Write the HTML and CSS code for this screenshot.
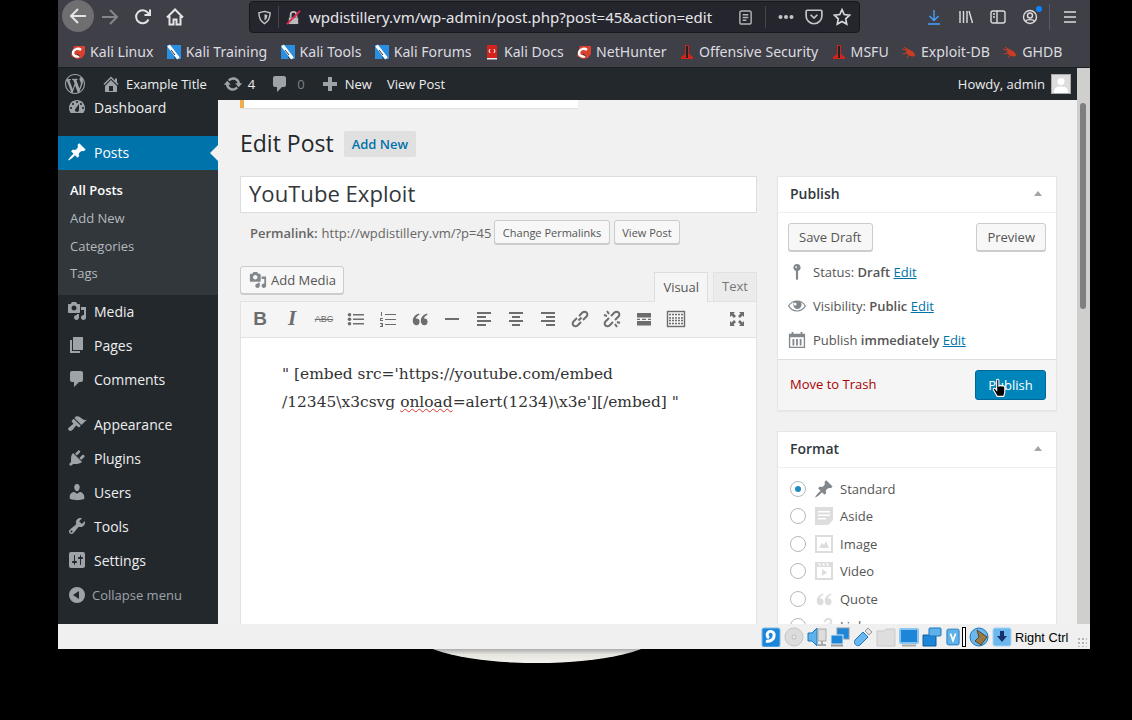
FILE: index.html
```html
<!DOCTYPE html>
<html lang="en">

<head>
  <meta charset="UTF-8" />
  <title>Edit Post | Example Title</title>
  <link rel="stylesheet" href="styles.css">
</head>

<body>
  <!-- dashicons used more than once -->
  <svg class="sprite">
    <symbol id="i-pin" viewBox="0 0 20 20"><path d="M10.44 3.02l1.82-1.82 6.36 6.35-1.83 1.82c-1.05-.68-2.48-.57-3.41.36l-.75.75c-.92.93-1.04 2.35-.35 3.41l-1.83 1.82-2.41-2.41-2.8 2.79c-.42.42-3.38 2.71-3.8 2.29s1.86-3.39 2.28-3.81l2.79-2.79L4.1 9.36l1.83-1.82c1.05.69 2.48.57 3.4-.36l.75-.75c.93-.92 1.05-2.35.36-3.41z"/></symbol>
    <symbol id="i-media" viewBox="0 0 20 20"><path d="M13 11V4c0-.55-.45-1-1-1h-1.67L9 1H5L3.67 3H2c-.55 0-1 .45-1 1v7c0 .55.45 1 1 1h10c.55 0 1-.45 1-1zM7 4.5c1.38 0 2.5 1.12 2.5 2.5S8.38 9.5 7 9.5 4.5 8.38 4.5 7 5.62 4.5 7 4.5zM14 6h5v10.5c0 1.38-1.12 2.5-2.5 2.5S14 17.88 14 16.5s1.12-2.5 2.5-2.5c.17 0 .34.02.5.05V9h-3V6zm-4 8.05V13h2v3.5c0 1.38-1.12 2.5-2.5 2.5S7 17.88 7 16.5 8.12 14 9.5 14c.17 0 .34.02.5.05z"/></symbol>
    <symbol id="i-comment" viewBox="0 0 20 20"><path d="M5 2h9c1.1 0 2 .9 2 2v7c0 1.1-.9 2-2 2h-2l-5 5v-5H5c-1.1 0-2-.9-2-2V4c0-1.1.9-2 2-2z"/></symbol>
    <symbol id="i-quote" viewBox="0 0 20 20"><path d="M9.5 13.2c0 1.8-1.4 3-3 3-2.2 0-3.7-1.8-3.7-4.2 0-3.6 2.6-6.6 6.2-7.4l.5 1.2c-2 .8-3.4 2.3-3.6 4 .4-.2.7-.3 1.1-.3 1.4 0 2.5 1.2 2.5 2.7zm8 0c0 1.8-1.4 3-3 3-2.2 0-3.7-1.8-3.7-4.2 0-3.6 2.6-6.6 6.2-7.4l.5 1.2c-2 .8-3.4 2.3-3.6 4 .4-.2.7-.3 1.1-.3 1.4 0 2.5 1.2 2.5 2.7z"/></symbol>
    <symbol id="i-dragon" viewBox="0 0 16 16"><path fill="#d8412f" d="M4 2h11v8l-3 4-5 1-6-3z"/><path fill="none" stroke="#fff" stroke-width="2.4" d="M11 6C8 3.500 3 5.500 3 9c0 3 4 4.500 6.500 3"/><path fill="none" stroke="#222" stroke-width="1" d="M7 10l3 2.500"/></symbol>
    <symbol id="i-tools" viewBox="0 0 16 16"><path fill="#2a8fe0" d="M1 1h14v14H1z"/><path fill="none" stroke="#fff" stroke-width="3.2" d="M2.500 1.500l10 13"/><path fill="none" stroke="#333" stroke-width="1" d="M5 6l4 5M8 13l2 2"/></symbol>
    <symbol id="i-tower" viewBox="0 0 16 16"><path fill="#d3231c" d="M6 1h4v9l4 3v2H2v-2l4-3z"/><path fill="#222" d="M7 2h2v12H7z"/></symbol>
    <symbol id="i-bug" viewBox="0 0 16 16"><path fill="#c93c25" d="M5 4l6 3c2 1 3 3 3 5-3 1-6 0-8-2-1-2-1-4-1-6z"/><path fill="none" stroke="#c93c25" d="M1 5l4 1M2 10l4-1M6 14l2-3M3 3l3 2"/></symbol>
  </svg>

  <div class="backdrop-plate"></div>

  <div class="window">
    <div class="navbar">
      <span class="nav-back">
        <svg viewBox="0 0 20 20" class="nav-icon"><path d="M3 10h15M10 3l-7 7 7 7"/></svg>
      </span>
      <svg viewBox="0 0 20 20" class="nav-icon nav-fwd"><path d="M2 10h15M10 3l7 7-7 7"/></svg>
      <svg viewBox="0 0 20 20" class="nav-icon nav-reload"><path d="M15.5 12.5a6.5 6.5 0 1 1-.8-6.8L16.5 8"/><path d="M17 2.500V8h-5.500"/></svg>
      <svg viewBox="0 0 20 20" class="nav-icon nav-home"><path d="M2 10.500l8-8 8 8M4.500 9v8.500h4v-5h3v5h4V9"/></svg>

      <div class="urlbar">
        <svg viewBox="0 0 16 16" class="url-shield"><path d="M8 1.500l6 1.500c0 5-1.500 9-6 11.500C3.500 12 2 8 2 3z"/><path class="solid" d="M8 4.500l3 .8c0 2.500-.8 4.500-3 6z"/></svg>
        <span class="url-divider"></span>
        <svg viewBox="0 0 16 16" class="url-lock"><path fill="#bbb" d="M3 8h10v7H3z"/><path fill="none" stroke="#bbb" stroke-width="2" d="M5 8V5a3 3 0 0 1 6 0v3"/><path stroke="#e22850" stroke-width="2" d="M1 15L15 1"/></svg>
        <span class="url-text">wpdistillery.vm/wp-admin/post.php?post=45&amp;action=edit</span>
        <svg viewBox="0 0 16 16" class="url-reader"><rect x="2" y="1" width="12" height="14" rx="2"/><path d="M5 5h6M5 8h6M5 11h4"/></svg>
        <span class="url-divider url-divider-right"></span>
        <svg viewBox="0 0 16 6" class="url-dots"><circle cx="2.500" cy="3" r="2"/><circle cx="8" cy="3" r="2"/><circle cx="13.500" cy="3" r="2"/></svg>
        <svg viewBox="0 0 16 16" class="url-pocket"><path d="M2 2h12a1 1 0 0 1 1 1v4a7 7 0 0 1-14 0V3a1 1 0 0 1 1-1z"/><path d="M5 6l3 3 3-3"/></svg>
        <svg viewBox="0 0 16 16" class="url-star"><path d="M8 1.500l2 4.300 4.700.6-3.400 3.200.9 4.700L8 12l-4.200 2.300.9-4.700L1.300 6.400 6 5.800z"/></svg>
      </div>

      <div class="nav-right">
        <svg viewBox="0 0 16 16" class="tool-icon tool-download"><path d="M8 1v10M3.500 7L8 11.500 12.500 7M2 15h12"/></svg>
        <svg viewBox="0 0 16 16" class="tool-icon tool-library"><path d="M2 2v12M5.500 2v12M9 2v12M11 2l3.500 12"/></svg>
        <svg viewBox="0 0 16 16" class="tool-icon tool-sidebar"><rect x="1" y="2" width="14" height="12" rx="2"/><path d="M7 2v12M3 5h2M3 8h2"/></svg>
        <span class="tool-account">
          <svg viewBox="0 0 16 16" class="tool-icon"><circle cx="8" cy="8" r="6.500"/><circle cx="8" cy="6.500" r="2.500"/><path d="M3.500 12.500c1-2.500 8-2.500 9 0"/></svg>
          <span class="account-dot"></span>
        </span>
        <span class="tool-divider"></span>
        <svg viewBox="0 0 16 16" class="tool-icon tool-menu"><path d="M2 3h12M2 8h12M2 13h12"/></svg>
      </div>
    </div>

    <div class="bookmarks">
      <span class="bookmark"><svg class="fav"><use href="#i-dragon"/></svg>Kali Linux</span>
      <span class="bookmark"><svg class="fav"><use href="#i-tools"/></svg>Kali Training</span>
      <span class="bookmark"><svg class="fav"><use href="#i-tools"/></svg>Kali Tools</span>
      <span class="bookmark"><svg class="fav"><use href="#i-tools"/></svg>Kali Forums</span>
      <span class="bookmark"><svg class="fav" viewBox="0 0 16 16"><path fill="#d3231c" d="M3 1h10v13H3z"/><path fill="#eee" d="M3 14h10v1.500H3z"/><path fill="none" stroke="#fff" d="M6 5L5 7l1 2M10 5l1 2-1 2"/></svg>Kali Docs</span>
      <span class="bookmark"><svg class="fav"><use href="#i-dragon"/></svg>NetHunter</span>
      <span class="bookmark"><svg class="fav"><use href="#i-tower"/></svg>Offensive Security</span>
      <span class="bookmark"><svg class="fav"><use href="#i-tower"/></svg>MSFU</span>
      <span class="bookmark"><svg class="fav"><use href="#i-bug"/></svg>Exploit-DB</span>
      <span class="bookmark"><svg class="fav"><use href="#i-bug"/></svg>GHDB</span>
    </div>

    <div class="viewport">
      <div class="page">
        <div class="adminbar">
          <svg viewBox="0 0 20 20" class="ab-logo"><path d="M20 10c0-5.510-4.490-10-10-10C4.480 0 0 4.490 0 10c0 5.520 4.480 10 10 10 5.510 0 10-4.480 10-10zM7.780 15.370L4.370 6.220c.55-.02 1.170-.08 1.170-.08.5-.06.44-1.130-.06-1.110 0 0-1.450.11-2.370.11-.18 0-.37 0-.58-.01C4.120 2.690 6.870 1.110 10 1.110c2.330 0 4.450.87 6.050 2.340-.68-.11-1.650.39-1.650 1.580 0 .74.45 1.360.9 2.100.35.61.55 1.360.55 2.460 0 1.490-1.400 5-1.400 5l-3.030-8.370c.54-.02.82-.17.82-.17.5-.05.44-1.250-.06-1.220 0 0-1.440.12-2.380.12-.87 0-2.330-.12-2.330-.12-.5-.03-.56 1.200-.06 1.220l.92.08 1.260 3.410zM17.410 10c.24-.64.74-1.870.43-4.250.7 1.290 1.050 2.710 1.050 4.250 0 3.290-1.730 6.240-4.400 7.780.97-2.590 1.940-5.200 2.920-7.780zM6.100 18.090C3.120 16.650 1.110 13.530 1.110 10c0-1.300.23-2.480.72-3.590C3.250 10.300 4.670 14.200 6.100 18.090zm4.030-6.630l2.580 6.980c-.86.29-1.760.45-2.710.45-.79 0-1.570-.11-2.290-.33.81-2.380 1.620-4.740 2.420-7.100z"/></svg>
          <span class="ab-item ab-site">
            <svg viewBox="0 0 20 20" class="ab-icon"><path d="M16 8.500l1.530 1.530-1.060 1.060L10 4.620l-6.470 6.470-1.060-1.060L10 2.500l4 4v-2h2v4zm-6-2.460l6 5.990V18H4v-5.970zM12 17v-5H8v5h4z"/></svg>
            Example Title
          </span>
          <span class="ab-item ab-updates">
            <svg viewBox="0 0 20 20" class="ab-icon"><path d="M10.200 3.280c3.530 0 6.430 2.610 6.920 6h2.080l-3.500 4-3.500-4h2.320c-.45-1.970-2.210-3.450-4.320-3.450-1.450 0-2.730.71-3.540 1.780L4.950 5.660C6.230 4.200 8.110 3.280 10.200 3.280zm-.4 13.440c-3.520 0-6.430-2.610-6.920-6H.8l3.500-4c1.170 1.330 2.330 2.670 3.500 4H5.480c.45 1.970 2.210 3.450 4.320 3.450 1.450 0 2.730-.71 3.540-1.780l1.710 1.950c-1.280 1.460-3.150 2.380-5.250 2.380z"/></svg>
            4
          </span>
          <span class="ab-item ab-comments">
            <svg class="ab-icon"><use href="#i-comment"/></svg>
            <span class="ab-zero">0</span>
          </span>
          <span class="ab-item ab-new">
            <svg viewBox="0 0 20 20" class="ab-icon"><path d="M17 8v4h-5v5H8v-5H3V8h5V3h4v5z"/></svg>
            New
          </span>
          <span class="ab-item">View Post</span>
          <span class="ab-howdy">Howdy, admin
            <span class="ab-avatar"><svg viewBox="0 0 18 18"><rect width="18" height="18" fill="#ddd"/><circle cx="9" cy="6.500" r="3.500" fill="#fff"/><path fill="#fff" d="M2 18c0-6 3-6.500 7-6.500s7 .5 7 6.500z"/></svg></span>
          </span>
        </div>

        <div class="wp-body">
          <nav class="sidebar">
            <div class="menu-item menu-dashboard">
              <svg viewBox="0 0 20 20" class="menu-icon"><path d="M3.760 16h12.480c1.100-1.370 1.760-3.110 1.760-5 0-4.420-3.580-8-8-8s-8 3.580-8 8c0 1.890.66 3.630 1.760 5zM10 4c.55 0 1 .45 1 1s-.45 1-1 1-1-.45-1-1 .45-1 1-1zM6 6c.55 0 1 .45 1 1s-.45 1-1 1-1-.45-1-1 .45-1 1-1zm8 0c.55 0 1 .45 1 1s-.45 1-1 1-1-.45-1-1 .45-1 1-1zm-5.370 5.550L12 7v6c0 1.100-.9 2-2 2s-2-.9-2-2c0-.57.24-1.080.63-1.450zM4 10c.55 0 1 .45 1 1s-.45 1-1 1-1-.45-1-1 .45-1 1-1zm12 0c.55 0 1 .45 1 1s-.45 1-1 1-1-.45-1-1 .45-1 1-1z"/></svg>
              Dashboard
            </div>
            <div class="menu-item menu-current">
              <svg class="menu-icon"><use href="#i-pin"/></svg>
              Posts
            </div>
            <div class="submenu">
              <div class="sub-item sub-current">All Posts</div>
              <div class="sub-item">Add New</div>
              <div class="sub-item">Categories</div>
              <div class="sub-item">Tags</div>
            </div>
            <div class="menu-item">
              <svg class="menu-icon"><use href="#i-media"/></svg>
              Media
            </div>
            <div class="menu-item">
              <svg viewBox="0 0 20 20" class="menu-icon"><path d="M6 15V2h10v13H6zm-1 1h8v2H3V5h2v11z"/></svg>
              Pages
            </div>
            <div class="menu-item">
              <svg class="menu-icon"><use href="#i-comment"/></svg>
              Comments
            </div>
            <div class="menu-sep"></div>
            <div class="menu-item">
              <svg viewBox="0 0 20 20" class="menu-icon"><path d="M14.480 11.060L7.410 3.990l1.500-1.500c.5-.56 2.300-.47 3.510.32 1.210.8 1.430 1.280 2.910 2.100 1.180.64 2.450 1.260 4.450.85zm-.71.71L6.700 4.700 4.930 6.470c-.39.39-.39 1.020 0 1.410l1.060 1.060c.39.39.39 1.030 0 1.420-.6.6-1.430 1.110-2.210 1.690-.35.26-.7.53-1.010.84C1.430 13.230.4 14.980 1.720 16.300c1.330 1.330 3.070.3 4.410-1.050.31-.31.58-.66.85-1.020.57-.78 1.080-1.610 1.690-2.210.39-.39 1.020-.39 1.410 0l1.060 1.060c.39.39 1.020.39 1.410 0z"/></svg>
              Appearance
            </div>
            <div class="menu-item">
              <svg viewBox="0 0 20 20" class="menu-icon"><path d="M13.110 4.360L9.870 7.600 8 5.730l3.240-3.240c.35-.34 1.050-.2 1.560.32.52.51.66 1.210.31 1.550zm-8 1.770l.91-1.120 9.010 9.010-1.190.84c-.71.71-2.630 1.160-3.820 1.160H6.140L4.900 17.260c-.59.59-1.540.59-2.120 0-.59-.58-.59-1.530 0-2.120l1.240-1.240v-3.880c0-1.130.4-3.190 1.090-3.890zm7.260 3.970l3.240-3.240c.34-.35 1.040-.21 1.550.31.52.51.66 1.210.31 1.550l-3.240 3.250z"/></svg>
              Plugins
            </div>
            <div class="menu-item">
              <svg viewBox="0 0 20 20" class="menu-icon"><path d="M10 9.250c-2.270 0-2.730-3.440-2.730-3.440C7 4.020 7.820 2 9.970 2c2.160 0 2.980 2.020 2.710 3.810 0 0-.41 3.440-2.680 3.440zm0 2.570L12.720 10c2.390 0 4.520 2.330 4.520 4.530v2.490s-3.650 1.130-7.240 1.130c-3.650 0-7.240-1.130-7.240-1.130v-2.490c0-2.250 1.940-4.480 4.470-4.480z"/></svg>
              Users
            </div>
            <div class="menu-item">
              <svg viewBox="0 0 20 20" class="menu-icon"><path d="M16.680 9.770c-1.340 1.340-3.300 1.670-4.950.99l-5.410 6.520c-.99.99-2.590.99-3.580 0s-.99-2.590 0-3.570l6.520-5.420c-.68-1.650-.35-3.610.99-4.950 1.280-1.280 3.120-1.620 4.720-1.060l-2.890 2.890 2.820 2.820 2.860-2.870c.53 1.580.18 3.390-1.080 4.650zM3.810 16.210c.4.39 1.040.39 1.430 0 .4-.4.4-1.040 0-1.430-.39-.4-1.030-.4-1.430 0-.39.39-.39 1.030 0 1.430z"/></svg>
              Tools
            </div>
            <div class="menu-item">
              <svg viewBox="0 0 20 20" class="menu-icon"><path d="M18 16V4c0-1.100-.9-2-2-2H4c-1.100 0-2 .9-2 2v12c0 1.100.9 2 2 2h12c1.100 0 2-.9 2-2zM8 11h1c.55 0 1 .45 1 1s-.45 1-1 1H8v1.500c0 .28-.22.5-.5.5s-.5-.22-.5-.5V13H6c-.55 0-1-.45-1-1s.45-1 1-1h1V5.500c0-.28.22-.5.5-.5s.5.22.5.5V11zm5-2h-1c-.55 0-1-.45-1-1s.45-1 1-1h1V5.500c0-.28.22-.5.5-.5s.5.22.5.5V7h1c.55 0 1 .45 1 1s-.45 1-1 1h-1v5.500c0 .28-.22.5-.5.5s-.5-.22-.5-.5V9z"/></svg>
              Settings
            </div>
            <div class="menu-item menu-collapse">
              <svg viewBox="0 0 20 20" class="menu-icon"><path d="M10 2a8 8 0 1 0 0 16 8 8 0 0 0 0-16zm2 12l-6-4 6-4z"/></svg>
              Collapse menu
            </div>
          </nav>

          <main class="content">
            <div class="notice"></div>
            <div class="heading">
              <h1>Edit Post</h1>
              <span class="add-new">Add New</span>
            </div>

            <div class="columns">
              <div class="editor-col">
                <div class="title-box">YouTube Exploit</div>
                <div class="permalink">
                  <b>Permalink:</b> <span class="permalink-url">http://wpdistillery.vm/?p=45</span>
                  <span class="btn btn-small">Change Permalinks</span>
                  <span class="btn btn-small">View Post</span>
                </div>
                <div class="editor-head">
                  <span class="btn btn-media"><svg class="media-icon"><use href="#i-media"/></svg>Add Media</span>
                  <div class="tabs">
                    <span class="tab tab-active">Visual</span>
                    <span class="tab">Text</span>
                  </div>
                </div>
                <div class="editor">
                  <div class="mce-toolbar">
                    <span class="mce-btn mce-b">B</span>
                    <span class="mce-btn mce-i">I</span>
                    <span class="mce-btn mce-abc">ABC</span>
                    <span class="mce-btn"><svg viewBox="0 0 20 20"><path d="M7 5h11v1.500H7zM7 9.500h11V11H7zM7 14h11v1.500H7z"/><circle cx="3.500" cy="5.800" r="1.800"/><circle cx="3.500" cy="10.300" r="1.800"/><circle cx="3.500" cy="14.800" r="1.800"/></svg></span>
                    <span class="mce-btn"><svg viewBox="0 0 20 20"><path d="M7 5h11v1H7zM7 10h11v1H7zM7 15h11v1H7zM3 3h1v4H3zM2 9h3v1H3v1h2v1H2zM2 14h3v4H2v-1h2v-.5H3v-1h1V15H2z"/></svg></span>
                    <span class="mce-btn"><svg><use href="#i-quote"/></svg></span>
                    <span class="mce-btn"><svg viewBox="0 0 20 20"><path d="M3 9h14v2H3z"/></svg></span>
                    <span class="mce-btn"><svg viewBox="0 0 20 20"><path d="M3 3h14v2H3zM3 7h9v2H3zM3 11h14v2H3zM3 15h9v2H3z"/></svg></span>
                    <span class="mce-btn"><svg viewBox="0 0 20 20"><path d="M3 3h14v2H3zM6 7h8v2H6zM3 11h14v2H3zM6 15h8v2H6z"/></svg></span>
                    <span class="mce-btn"><svg viewBox="0 0 20 20"><path d="M3 3h14v2H3zM8 7h9v2H8zM3 11h14v2H3zM8 15h9v2H8z"/></svg></span>
                    <span class="mce-btn"><svg viewBox="0 0 20 20" class="mce-stroke"><path d="M8.500 11.500l3-3M7 9l-3.500 3.500a2.800 2.800 0 0 0 4 4L11 13M9 7l3.500-3.500a2.800 2.800 0 0 1 4 4L13 11"/></svg></span>
                    <span class="mce-btn"><svg viewBox="0 0 20 20" class="mce-stroke"><path d="M7 9l-3.500 3.500a2.800 2.800 0 0 0 4 4L11 13M9 7l3.500-3.500a2.800 2.800 0 0 1 4 4L13 11M5 2l2 3M2 6l3 1M15 18l-2-3M18 14l-3-1"/></svg></span>
                    <span class="mce-btn"><svg viewBox="0 0 20 20"><path d="M3 4h14v4.500H3zM3 12h14v4.500H3zM3 9.700h3v1.200H3zM8 9.700h4v1.200H8zM14 9.700h3v1.200h-3z"/></svg></span>
                    <span class="mce-btn mce-wide"><svg viewBox="0 0 22 22" class="mce-kitchen"><rect x="2.500" y="3.500" width="17" height="15"/><path d="M4 6.500h14M4 10h14M4 12.500h14M4 15.500h14" stroke-dasharray="2 1"/></svg></span>
                    <span class="mce-btn mce-full"><svg viewBox="0 0 20 20"><path d="M3 3h5L6.500 4.500 9 7l-2 2-2.500-2.500L3 8zM17 3v5l-1.500-1.500L13 9l-2-2 2.500-2.500L12 3zM3 17v-5l1.500 1.500L7 11l2 2-2.500 2.500L8 17zM17 17h-5l1.500-1.500L11 13l2-2 2.500 2.500L17 12z"/></svg></span>
                  </div>
                  <div class="mce-body">
                    " [embed src='https://youtube.com/embed<br>
                    /12345\x3csvg <span class="spell">onload</span>=alert(1234)\x3e'][/embed] "
                  </div>
                </div>
              </div>

              <div class="side-col">
                <section class="postbox">
                  <div class="postbox-head">Publish<span class="toggle"></span></div>
                  <div class="publish-actions">
                    <span class="btn btn-action">Save Draft</span>
                    <span class="btn btn-action">Preview</span>
                  </div>
                  <div class="misc-row misc-first">
                    <svg viewBox="0 0 20 20" class="misc-icon"><path d="M10 1a4 4 0 0 1 1.200 7.800V18l-1.200 1-1.200-1V8.800A4 4 0 0 1 10 1zM9 3.500a1 1 0 1 0 0 2 1 1 0 0 0 0-2z"/></svg>
                    <span>Status: <b>Draft</b> <a>Edit</a></span>
                  </div>
                  <div class="misc-row">
                    <svg viewBox="0 0 20 20" class="misc-icon"><path fill-rule="evenodd" d="M10 3.800c4.100 0 7.700 2.200 9.700 5.600l.3.600-.3.600c-2 3.400-5.600 5.600-9.700 5.600S2.300 14 .3 10.600L0 10l.3-.6C2.300 6 5.900 3.800 10 3.800zM5.800 5.900C4 6.800 2.500 8.200 1.500 10c1.800 3 5 4.900 8.500 4.900s6.700-1.900 8.500-4.900c-1-1.800-2.500-3.200-4.300-4.100.6.800.9 1.700.9 2.700a4.600 4.600 0 0 1-9.200 0c0-1 .3-1.900.9-2.700zM8 6.500a1.500 1.500 0 1 0 0 3 1.500 1.500 0 0 0 0-3z"/></svg>
                    <span>Visibility: <b>Public</b> <a>Edit</a></span>
                  </div>
                  <div class="misc-row">
                    <svg viewBox="0 0 20 20" class="misc-icon"><path fill-rule="evenodd" d="M4 1h2v2h8V1h2v2h3v16H1V3h3zM2.500 7v10.500h15V7zM5 9h2v7H5zM9 9h2v7H9zM13 9h2v7h-2z"/></svg>
                    <span>Publish <b>immediately</b> <a>Edit</a></span>
                  </div>
                  <div class="publish-foot">
                    <span class="trash">Move to Trash</span>
                    <span class="btn-primary">Publish
                      <svg viewBox="0 0 14 18" class="hand-cursor"><path fill="#000" stroke="#fff" stroke-width="1" d="M4 1.500c.8-.8 2-.4 2 .8v5l1.200-.6 1.300.4 1.300-.2 1.500.8V13l-1 3.500H4.500L1 10.500c-.4-1 .8-1.800 1.700-1L4 11z"/></svg>
                    </span>
                  </div>
                </section>

                <section class="postbox">
                  <div class="postbox-head">Format<span class="toggle"></span></div>
                  <div class="formats">
                    <div class="format-row"><span class="radio radio-on"></span><svg class="format-icon format-icon-on"><use href="#i-pin"/></svg>Standard</div>
                    <div class="format-row"><span class="radio"></span><svg viewBox="0 0 20 20" class="format-icon"><path fill-rule="evenodd" d="M1 1h18v13l-5 5H1zm3 4v1.500h12V5zm0 3.500V10h12V8.500zM4 12v1.500h8V12z"/></svg>Aside</div>
                    <div class="format-row"><span class="radio"></span><svg viewBox="0 0 20 20" class="format-icon"><path fill-rule="evenodd" d="M1 1h18v18H1zm2 2v14h14V3zm2 11l3-5 2 2 2-4 3 7z"/></svg>Image</div>
                    <div class="format-row"><span class="radio"></span><svg viewBox="0 0 20 20" class="format-icon"><path fill-rule="evenodd" d="M1 1h18v18H1zm2 5v11h14V6zm5 2l5 3.500L8 15zM4 2.500l1 2h2l-1-2zm4 0l1 2h2l-1-2zm4 0l1 2h2l-1-2z"/></svg>Video</div>
                    <div class="format-row"><span class="radio"></span><svg class="format-icon"><use href="#i-quote"/></svg>Quote</div>
                    <div class="format-row"><span class="radio"></span><svg viewBox="0 0 20 20" class="format-icon"><path d="M9 13l5-5M7 10l-4 4a3 3 0 0 0 4 4l3-3M10 6l3-3a3 3 0 0 1 4 4l-3 3" fill="none" stroke="#ddd" stroke-width="2"/></svg>Link</div>
                  </div>
                </section>
              </div>
            </div>
          </main>
        </div>
      </div>

      <div class="scrollbar"><span class="scroll-thumb"></span></div>
    </div>

    <div class="statusbar">
      <svg viewBox="0 0 20 20" class="vb"><rect x="1" y="1" width="18" height="19" rx="2" fill="#1d86d8" stroke="#7dbcea"/><path d="M5 14c3 1 8-1 8-5a3.500 3.500 0 1 0-5 2" fill="none" stroke="#fff" stroke-width="3"/></svg>
      <svg viewBox="0 0 20 20" class="vb"><circle cx="10" cy="10" r="9" fill="#dcdcdc" stroke="#c4c4c4"/><circle cx="10" cy="10" r="2" fill="#eee" stroke="#bbb"/></svg>
      <svg viewBox="0 0 20 20" class="vb"><path d="M1 6h4l5-5v18l-5-5H1z" fill="#5db2ea" stroke="#1c76bd"/><rect x="11" y="2" width="8" height="12" fill="#ddd" stroke="#aaa"/><path d="M15 14v3M11 18h8" stroke="#aaa" stroke-width="2"/></svg>
      <svg viewBox="0 0 20 20" class="vb"><rect x="7" y="1" width="12" height="11" fill="#1d86d8" stroke="#8a9aa6"/><rect x="1" y="8" width="12" height="9" fill="#1d86d8" stroke="#dfeaf3"/><path d="M1 18.500h12" stroke="#999" stroke-width="2"/></svg>
      <svg viewBox="0 0 20 20" class="vb"><path d="M2 13l8-8 5 5-8 8c-3 2-7-1-5-5z" fill="#6bb8ef" stroke="#1c76bd"/><path d="M12 4l3-3 4 4-3 3z" fill="#e4e4e4" stroke="#999"/></svg>
      <svg viewBox="0 0 20 20" class="vb"><path d="M1 4h7l2-2h9v17H1z" fill="#dedede" stroke="#cacaca"/></svg>
      <svg viewBox="0 0 20 20" class="vb"><rect x="1" y="2" width="18" height="14" rx="1" fill="#1d86d8" stroke="#89c4ee" stroke-width="2"/><path d="M3 18.500h14" stroke="#aaa" stroke-width="2"/></svg>
      <svg viewBox="0 0 20 20" class="vb"><path d="M1 8h13v11H1z" fill="#1d86d8" stroke="#145c96"/><rect x="7" y="1" width="12" height="8" rx="1" fill="#5db2ea" stroke="#1c76bd"/></svg>
      <svg viewBox="0 0 16 20" class="vb vb-narrow"><rect x="1" y="1" width="14" height="18" rx="2" fill="#5db2ea" stroke="#1c76bd"/><path d="M5 6l3 8 3-8" fill="none" stroke="#fff" stroke-width="2"/></svg>
      <span class="vb-bar"></span>
      <svg viewBox="0 0 20 20" class="vb"><circle cx="10" cy="10" r="9" fill="#6bb8ef" stroke="#1c76bd"/><path d="M8 3l10 7-6 8-6-4 4-4z" fill="#9a7a45" stroke="#5a4520"/></svg>
      <svg viewBox="0 0 20 20" class="vb"><rect x="1" y="1" width="18" height="18" rx="2" fill="#6bb8ef" stroke="#a9d5f4"/><path d="M8 4h4v5h3l-5 6-5-6h3z" fill="#17306b"/></svg>
      <span class="vb-label">Right Ctrl</span>
      <span class="grip"></span>
    </div>
  </div>
</body>

</html>
```
FILE: styles.css
```css
* {
  box-sizing: border-box;
}

html, body {
  height: 100%;
  overflow: hidden;
}

body {
  margin: 0;
  background: #000;
  font-family: "Open Sans", sans-serif;
  font-size: 13px;
  color: #444;
}

.sprite {
  display: none;
}

/* bit of desktop wallpaper showing under the window */
.backdrop-plate {
  position: absolute;
  left: 414px;
  top: 603px;
  width: 246px;
  height: 60px;
  border-radius: 50%;
  background: linear-gradient(#a8a8a8 76%, #e6e5e0 86%, #f2f1ec);
}

.window {
  position: relative;
  width: 1032px;
  height: 649px;
  margin-left: 58px;
  display: flex;
  flex-direction: column;
}

/* firefox chrome */
.navbar {
  height: 34px;
  background: #3f3f47;
  display: flex;
  align-items: center;
  padding-left: 4px;
}

.nav-icon {
  width: 20px;
  height: 20px;
  fill: none;
  stroke: #e4e4e6;
  stroke-width: 2;
}

.nav-back {
  width: 32px;
  height: 32px;
  margin-bottom: 2px;
  border-radius: 50%;
  background: #6f6f72;
  display: flex;
  align-items: center;
  justify-content: center;
}

.nav-fwd {
  margin-left: 6px;
  stroke: #85858a;
}

.nav-reload {
  margin-left: 13px;
}

.nav-home {
  margin-left: 12px;
}

.urlbar {
  width: 611px;
  height: 32px;
  margin-left: 64px;
  background: #25252d;
  border: 1px solid #18181c;
  border-radius: 4px;
  display: flex;
  align-items: center;
  padding-left: 7px;
  color: #e6e6e8;
}

.url-shield {
  width: 15px;
  height: 15px;
  fill: none;
  stroke: #c4c4c6;
  stroke-width: 1.5;
}

.url-shield .solid {
  fill: #c4c4c6;
  stroke: none;
}

.url-divider {
  width: 1px;
  height: 22px;
  margin-left: 6px;
  background: #45454c;
}

.url-lock {
  width: 15px;
  height: 15px;
  margin-left: 7px;
}

.url-text {
  margin-left: 8px;
  font-family: "Noto Sans", sans-serif;
  font-size: 15px;
  white-space: nowrap;
}

.url-reader {
  width: 15px;
  height: 17px;
  margin-left: 26px;
  fill: none;
  stroke: #b5b5b8;
  stroke-width: 1.5;
}

.url-divider-right {
  margin-left: 12px;
}

.url-dots {
  width: 16px;
  height: 6px;
  margin-left: 12px;
  fill: #c4c4c6;
}

.url-pocket {
  width: 18px;
  height: 18px;
  margin-left: 11px;
  fill: none;
  stroke: #c4c4c6;
  stroke-width: 1.5;
}

.url-star {
  width: 18px;
  height: 18px;
  margin-left: 10px;
  fill: none;
  stroke: #d8d8da;
  stroke-width: 1.5;
}

.nav-right {
  flex: 1;
  display: flex;
  align-items: center;
  padding-left: 66px;
}

.tool-icon {
  width: 16px;
  height: 16px;
  fill: none;
  stroke: #dcdcde;
  stroke-width: 1.4;
  display: block;
}

.tool-download {
  stroke: #45a1ff;
}

.tool-library {
  margin-left: 16px;
}

.tool-sidebar {
  margin-left: 16px;
}

.tool-account {
  position: relative;
  margin-left: 16px;
}

.account-dot {
  position: absolute;
  right: -4px;
  top: -3px;
  width: 6px;
  height: 6px;
  border-radius: 50%;
  background: #0a84ff;
}

.tool-divider {
  width: 1px;
  height: 26px;
  margin-left: 11px;
  background: #5a5a62;
}

.tool-menu {
  margin-left: 12px;
}

.bookmarks {
  height: 34px;
  background: #3f3f47;
  border-bottom: 1px solid #1d1d22;
  display: flex;
  align-items: center;
  padding: 2px 0 0 12px;
  gap: 12.3px;
}

.bookmark {
  display: flex;
  align-items: center;
  font-family: "Noto Sans", sans-serif;
  font-size: 14.1px;
  color: #dcdce0;
  white-space: nowrap;
}

.fav {
  width: 16px;
  height: 16px;
  margin-right: 4px;
}

.viewport {
  flex: 1;
  min-height: 0;
  display: flex;
}

.page {
  flex: 1;
  min-width: 0;
  display: flex;
  flex-direction: column;
}

.scrollbar {
  width: 13px;
  background: #cfcfcd;
  padding: 35px 4px 0 3px;
}

.scroll-thumb {
  display: block;
  height: 206px;
  border-radius: 3px;
  background: #7f7f82;
}

/* wp admin bar */
.adminbar {
  height: 32px;
  flex: none;
  background: #23282d;
  display: flex;
  align-items: center;
  padding: 0 7px;
  color: #eee;
}

.ab-logo {
  width: 20px;
  height: 20px;
  fill: #9ea3a8;
}

.ab-item {
  display: flex;
  align-items: center;
  margin-left: 15px;
  white-space: nowrap;
}

.ab-icon {
  width: 20px;
  height: 20px;
  fill: #9ea3a8;
  margin-right: 5px;
}

.ab-site {
  margin-left: 16px;
}

.ab-updates {
  margin-left: 16px;
}

.ab-comments {
  margin-left: 15px;
}

.ab-comments .ab-icon {
  margin-right: 7px;
}

.ab-zero {
  color: #7e8286;
}

.ab-new {
  margin-left: 15px;
}

.ab-howdy {
  margin-left: auto;
  display: flex;
  align-items: center;
  gap: 7px;
}

.ab-avatar {
  width: 18px;
  height: 18px;
  outline: 1px solid #aaa;
}

.ab-avatar svg {
  display: block;
}

.wp-body {
  flex: 1;
  min-height: 0;
  display: flex;
  overflow: hidden;
  background: #f1f1f1;
}

/* wp left menu */
.sidebar {
  width: 160px;
  flex: none;
  background: #23282d;
  overflow: hidden;
  color: #eee;
  font-size: 14px;
}

.menu-item {
  height: 34px;
  display: flex;
  align-items: center;
  padding: 0 0 2px 9px;
}

.menu-icon {
  width: 20px;
  height: 20px;
  fill: #9ea3a8;
  margin-right: 7px;
}

.menu-dashboard {
  margin-top: -9px;
  margin-bottom: 11px;
}

.menu-current {
  position: relative;
  background: #0073aa;
  color: #fff;
}

.menu-current .menu-icon {
  fill: #fff;
}

.menu-current::after {
  content: "";
  position: absolute;
  right: 0;
  top: 9px;
  border: 8px solid transparent;
  border-right-color: #f1f1f1;
  border-left-width: 0;
}

.submenu {
  background: #32373c;
  padding: 6.4px 0 8px;
  font-size: 13px;
  color: #b4b9be;
  height: 125px;
}

.sub-item {
  height: 27.7px;
  padding-left: 12px;
  display: flex;
  align-items: center;
}

.sub-current {
  color: #fff;
  font-weight: 600;
}

.menu-sep {
  height: 11px;
}

.menu-collapse {
  color: #9ea3a8;
  font-size: 13px;
  padding-bottom: 0;
}

.menu-collapse .menu-icon {
  margin-right: 5px;
}

/* main content */
.content {
  flex: 1;
  min-width: 0;
  padding-left: 22px;
  overflow: hidden;
}

.notice {
  width: 338px;
  height: 8px;
  background: #fff;
  border-left: 4px solid #f0ad4e;
  box-shadow: 0 1px 1px rgba(0, 0, 0, .06);
}

.heading {
  display: flex;
  align-items: center;
  height: 46px;
  margin-top: 12px;
}

.heading h1 {
  margin: 0;
  font-size: 23px;
  font-weight: 400;
  color: #23282d;
}

.add-new {
  margin: 1px 0 0 10px;
  height: 26px;
  padding: 0 8px;
  display: flex;
  align-items: center;
  background: #e0e0e0;
  border-radius: 2px;
  color: #0073aa;
  font-weight: 600;
}

.columns {
  display: flex;
  gap: 20px;
  align-items: flex-start;
  margin-top: 10px;
}

.editor-col {
  width: 517px;
  flex: none;
}

.title-box {
  height: 37px;
  background: #fff;
  border: 1px solid #ddd;
  padding-left: 8px;
  font-size: 22.1px;
  line-height: 32px;
  color: #32373c;
}

.permalink {
  display: flex;
  align-items: center;
  gap: 4px;
  height: 24px;
  margin-top: 7px;
  padding-left: 10px;
  color: #666;
}

.permalink b {
  margin-top: 2px;
  font-weight: 600;
}

.permalink-url {
  margin: 2px -1px 0 0;
}

.btn {
  display: inline-flex;
  align-items: center;
  justify-content: center;
  background: #f7f7f7;
  border: 1px solid #ccc;
  border-radius: 3px;
  box-shadow: 0 1px 0 #ccc;
  color: #555;
  white-space: nowrap;
}

.btn-small {
  height: 24px;
  padding: 0 7.5px;
  font-size: 11px;
}

.editor-head {
  display: flex;
  justify-content: space-between;
  align-items: flex-end;
  margin-top: 22px;
}

.btn-media {
  height: 28px;
  padding: 0 7px 0 8px;
  margin-bottom: 7px;
}

.media-icon {
  width: 18px;
  height: 18px;
  fill: #82878c;
  margin-right: 4px;
}

.tabs {
  display: flex;
  gap: 5px;
}

.tab {
  height: 29px;
  padding: 0 8px 2px;
  display: flex;
  align-items: center;
  background: #ebebeb;
  border: 1px solid #e2e2e2;
  border-bottom: 0;
  color: #777;
}

.tab-active {
  height: 30px;
  background: #f5f5f5;
  color: #555;
  border-color: #ddd;
  margin-bottom: -1px;
  position: relative;
  padding: 0 8px 2px;
}

.editor {
  background: #fff;
  border: 1px solid #e2e2e2;
  height: 400px;
}

.mce-toolbar {
  height: 36px;
  background: #f5f5f5;
  border-bottom: 1px solid #e2e2e2;
  display: flex;
  align-items: center;
  padding: 0 0 2px 3px;
}

.mce-btn {
  width: 32px;
  display: flex;
  align-items: center;
  justify-content: center;
  fill: #6d6d6d;
  color: #6d6d6d;
  font-family: "Liberation Sans", sans-serif;
}

.mce-btn svg {
  width: 20px;
  height: 20px;
}

.mce-stroke {
  fill: none;
  stroke: #6d6d6d;
  stroke-width: 2;
}

.mce-kitchen {
  fill: none;
  stroke: #6d6d6d;
  stroke-width: 1.4;
}

.mce-b {
  font-size: 19px;
  font-weight: 700;
}

.mce-i {
  font-family: "Liberation Serif", serif;
  font-size: 21px;
  font-weight: 700;
  font-style: italic;
}

.mce-abc {
  font-size: 9px;
  text-decoration: line-through;
}

.mce-wide svg {
  width: 22px;
  height: 22px;
}

.mce-full {
  margin-left: auto;
  margin-right: 3px;
}

.mce-body {
  padding: 22px 0 0 41px;
  font-family: "DejaVu Serif", serif;
  font-size: 15.45px;
  line-height: 28px;
  color: #333;
  white-space: nowrap;
}

.spell {
  text-decoration: underline wavy #d33;
  text-decoration-thickness: 1px;
}

/* right column */
.side-col {
  width: 280px;
  flex: none;
}

.postbox {
  background: #fff;
  border: 1px solid #e5e5e5;
  box-shadow: 0 1px 1px rgba(0, 0, 0, .04);
  margin-bottom: 20px;
}

.postbox-head {
  height: 36px;
  padding: 0 0 2px 12px;
  border-bottom: 1px solid #eee;
  display: flex;
  align-items: center;
  justify-content: space-between;
  font-size: 14px;
  font-weight: 600;
  color: #32373c;
}

.toggle {
  margin-right: 14px;
  border: 4px solid transparent;
  border-top-width: 0;
  border-bottom: 5px solid #a0a5aa;
}

.publish-actions {
  display: flex;
  justify-content: space-between;
  padding: 10px 10px 0;
}

.btn-action {
  height: 28px;
  padding: 0 10px;
}

.misc-row {
  height: 34px;
  display: flex;
  align-items: center;
  padding-left: 10px;
  color: #555;
}

.misc-first {
  margin-top: 4px;
}

.misc-row b {
  font-weight: 600;
}

.misc-row a {
  color: #0073aa;
  text-decoration: underline;
}

.misc-icon {
  width: 18px;
  height: 18px;
  fill: #82878c;
  margin-right: 7px;
}

.publish-foot {
  height: 51px;
  margin-top: 2px;
  background: #f5f5f5;
  border-top: 1px solid #ddd;
  display: flex;
  align-items: center;
  justify-content: space-between;
  padding: 0 10px 0 12px;
}

.trash {
  margin-bottom: 2px;
  color: #a00;
}

.btn-primary {
  position: relative;
  width: 71px;
  height: 30px;
  display: flex;
  align-items: center;
  justify-content: center;
  background: #0085ba;
  border: 1px solid #006799;
  border-radius: 3px;
  color: #fff;
}

/* mouse pointer caught in the shot */
.hand-cursor {
  position: absolute;
  left: 16px;
  top: 7px;
  width: 16px;
  height: 20px;
}

.formats {
  padding: 7px 12px 0;
}

.format-row {
  height: 27.5px;
  display: flex;
  align-items: center;
  color: #555;
}

.radio {
  width: 16px;
  height: 16px;
  border: 1px solid #b4b9be;
  border-radius: 50%;
  background: #fff;
  margin-right: 8px;
  position: relative;
}

.radio-on::after {
  content: "";
  position: absolute;
  left: 4px;
  top: 4px;
  width: 6px;
  height: 6px;
  border-radius: 50%;
  background: #1e8cbe;
}

.format-icon {
  width: 20px;
  height: 20px;
  fill: #ddd;
  margin-right: 6px;
}

.format-icon-on {
  fill: #82878c;
}

/* virtualbox status bar */
.statusbar {
  position: relative;
  height: 25px;
  flex: none;
  background: #f0f0f0;
  display: flex;
  align-items: center;
  padding-left: 703px;
  gap: 3px;
}

.vb {
  width: 20px;
  height: 20px;
  flex: none;
}

.vb-narrow {
  width: 14px;
  margin-left: 1px;
  margin-right: -1px;
}

.vb-bar {
  width: 4px;
  height: 20px;
  border: 1px solid #000;
  background: #fff;
}

.vb-label {
  margin-top: 2px;
  font-family: "Liberation Sans", sans-serif;
  font-size: 12.8px;
  color: #000;
  white-space: nowrap;
}

.grip {
  position: absolute;
  right: 3px;
  bottom: 2px;
  width: 10px;
  height: 10px;
  background-image: radial-gradient(#b5b5b5 1.2px, transparent 1.2px);
  background-size: 4px 4px;
}
```
